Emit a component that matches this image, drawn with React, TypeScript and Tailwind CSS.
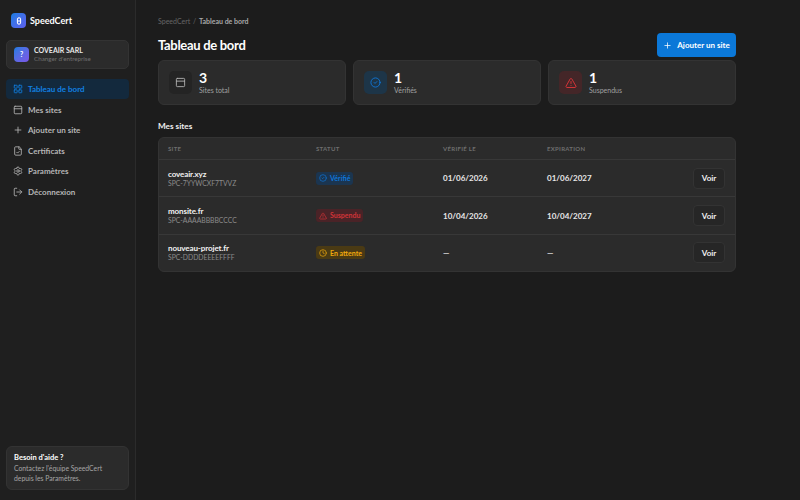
import React from 'react';
import { LayoutGrid, Plus, FileCheck, Settings, LogOut, CircleCheck, TriangleAlert, Clock, PanelTop } from 'lucide-react';

const navItems = [
  { label: 'Tableau de bord', icon: LayoutGrid, active: true },
  { label: 'Mes sites', icon: PanelTop },
  { label: 'Ajouter un site', icon: Plus },
  { label: 'Certificats', icon: FileCheck },
  { label: 'Paramètres', icon: Settings },
  { label: 'Déconnexion', icon: LogOut },
];

const sites = [
  { name: 'coveair.xyz', code: 'SPC-7YYWCXF7TVVZ', status: 'verified', verified: '01/06/2026', expires: '01/06/2027' },
  { name: 'monsite.fr', code: 'SPC-AAAABBBBCCCC', status: 'suspended', verified: '10/04/2026', expires: '10/04/2027' },
  { name: 'nouveau-projet.fr', code: 'SPC-DDDDEEEEFFFF', status: 'pending', verified: '—', expires: '—' },
];

const StatusBadge = ({ status }: { status: string }) => {
  if (status === 'verified') {
    return (
      <span className="inline-flex items-center gap-[3px] h-[13px] px-[3px] rounded-[3px] bg-[#1b3550] text-[#0f76d8] text-[7px] font-bold">
        <CircleCheck className="w-[8px] h-[8px]" />
        Vérifié
      </span>
    );
  }
  if (status === 'suspended') {
    return (
      <span className="inline-flex items-center gap-[3px] h-[13px] px-[3px] rounded-[3px] bg-[#4a2327] text-[#d13438] text-[7px] font-bold">
        <TriangleAlert className="w-[8px] h-[8px]" />
        Suspendu
      </span>
    );
  }
  return (
    <span className="inline-flex items-center gap-[3px] h-[13px] px-[3px] rounded-[3px] bg-[#4a3a14] text-[#f0a90c] text-[7px] font-bold">
      <Clock className="w-[8px] h-[8px]" />
      En attente
    </span>
  );
};

const StatCard = ({ value, label, iconBox, children }: { value: string; label: string; iconBox: string; children: React.ReactNode }) => (
  <div className="flex-1 h-[45px] rounded-[6px] bg-[#2b2b2b] border border-[#333333] flex items-center gap-[7px] pl-[10px]">
    <div className={`w-[23px] h-[23px] rounded-[5px] flex items-center justify-center ${iconBox}`}>{children}</div>
    <div className="flex flex-col">
      <span className="text-[14px] leading-[15px] font-bold text-white">{value}</span>
      <span className="text-[7px] leading-[10px] text-[#a0a0a0]">{label}</span>
    </div>
  </div>
);

export default function App() {
  return (
    <div className="flex w-[800px] h-[500px] bg-[#1c1c1c] overflow-hidden font-['Lato',sans-serif]">
      <aside className="w-[136px] shrink-0 h-full bg-[#1f1f1f] border-r border-[#2b2b2b] flex flex-col px-[6px]">
        <div className="flex items-center gap-[4px] pl-[5px] pt-[1px] h-[40px]">
          <div className="w-[15px] h-[15px] rounded-[4px] bg-gradient-to-br from-[#0f7be0] to-[#5b5ff0] flex items-center justify-center">
            <svg viewBox="0 0 10 10" className="w-[8px] h-[8px]" fill="none" stroke="white" strokeWidth="1.3">
              <rect x="3" y="1" width="4" height="8" rx="2" />
              <path d="M3 5h4" />
            </svg>
          </div>
          <span className="text-[9px] font-bold text-white">SpeedCert</span>
        </div>
        <div className="h-[29px] rounded-[5px] bg-[#2b2b2b] border border-[#333333] flex items-center gap-[5px] pl-[7px]">
          <div className="w-[15px] h-[15px] rounded-[4px] bg-gradient-to-br from-[#0f7be0] to-[#7a55e8] flex items-center justify-center text-white text-[7px] font-bold">?</div>
          <div className="flex flex-col">
            <span className="text-[7px] leading-[9px] font-bold text-[#e8e8e8]">COVEAIR SARL</span>
            <span className="text-[6.25px] leading-[8px] text-[#707070]">Changer d'entreprise</span>
          </div>
        </div>
        <nav className="mt-[10px] flex flex-col gap-[0.6px]">
          {navItems.map((item) => {
            const Icon = item.icon;
            return (
              <div
                key={item.label}
                className={`h-[20px] rounded-[4px] flex items-center gap-[5px] pl-[7px] text-[8px] font-bold ${
                  item.active ? 'bg-[#13293d] text-[#1180e2]' : 'text-[#b5b5b5]'
                }`}
              >
                <Icon className="w-[10px] h-[10px]" />
                {item.label}
              </div>
            );
          })}
        </nav>
        <div className="mt-auto mb-[10px] h-[44px] rounded-[6px] bg-[#2b2b2b] border border-[#333333] pl-[7px] pr-[8px] pt-[6px]">
          <p className="text-[7.5px] leading-[10px] font-bold text-white">Besoin d'aide ?</p>
          <p className="text-[6.8px] leading-[10px] text-[#a5a5a5]">Contactez l'équipe SpeedCert depuis les Paramètres.</p>
        </div>
      </aside>

      <main className="flex-1 pl-[22px] pr-[64px]">
        <div className="pt-[16px] text-[7px] leading-[10px] text-[#666666]">
          SpeedCert <span className="mx-[1px]">/</span> <span className="font-bold text-[#a8a8a8]">Tableau de bord</span>
        </div>
        <div className="flex items-start justify-between h-[27px] mt-[7px]">
          <h1 className="text-[13px] leading-[24px] font-bold tracking-[-0.3px] text-white">Tableau de bord</h1>
          <button className="h-[24px] w-[79px] rounded-[4px] bg-[#0b78d8] text-white text-[8px] font-bold flex items-center justify-center gap-[5px]">
            <Plus className="w-[9px] h-[9px]" />
            Ajouter un site
          </button>
        </div>
        <div className="flex gap-[7px]">
          <StatCard value="3" label="Sites total" iconBox="bg-[#242424]">
            <PanelTop className="w-[11px] h-[11px] text-[#b0b0b0]" />
          </StatCard>
          <StatCard value="1" label="Vérifiés" iconBox="bg-[#1d3548]">
            <CircleCheck className="w-[11px] h-[11px] text-[#0f76d8]" />
          </StatCard>
          <StatCard value="1" label="Suspendus" iconBox="bg-[#442628]">
            <TriangleAlert className="w-[12px] h-[12px] text-[#d13438]" />
          </StatCard>
        </div>
        <h2 className="mt-[15px] text-[8.2px] leading-[12px] font-bold text-[#f0f0f0]">Mes sites</h2>
        <div className="mt-[5px] rounded-[6px] bg-[#2b2b2b] border border-[#333333] overflow-hidden">
          <div className="grid grid-cols-[148px_127px_104px_1fr] items-center h-[21px] pl-[9px] text-[6px] font-bold tracking-[0.3px] text-[#6e6e6e]">
            <span>SITE</span>
            <span>STATUT</span>
            <span>VÉRIFIÉ LE</span>
            <span>EXPIRATION</span>
          </div>
          {sites.map((site) => (
            <div key={site.name} className="grid grid-cols-[148px_127px_104px_1fr] items-center h-[37.4px] pl-[9px] pr-[10px] border-t border-[#383838]">
              <div className="flex flex-col">
                <span className="text-[8px] leading-[10px] font-bold tracking-[-0.1px] text-[#f2f2f2]">{site.name}</span>
                <span className="text-[6.8px] leading-[9px] text-[#8c8c8c]">{site.code}</span>
              </div>
              <div className="flex"><StatusBadge status={site.status} /></div>
              <span className="text-[8px] font-bold text-[#e8e8e8]">{site.verified}</span>
              <div className="flex items-center justify-between">
                <span className="text-[8px] font-bold text-[#e8e8e8]">{site.expires}</span>
                <button className="w-[32px] h-[21px] rounded-[4px] bg-[#262626] border border-[#333333] text-[8px] font-bold text-[#f0f0f0]">Voir</button>
              </div>
            </div>
          ))}
        </div>
      </main>
    </div>
  );
}
